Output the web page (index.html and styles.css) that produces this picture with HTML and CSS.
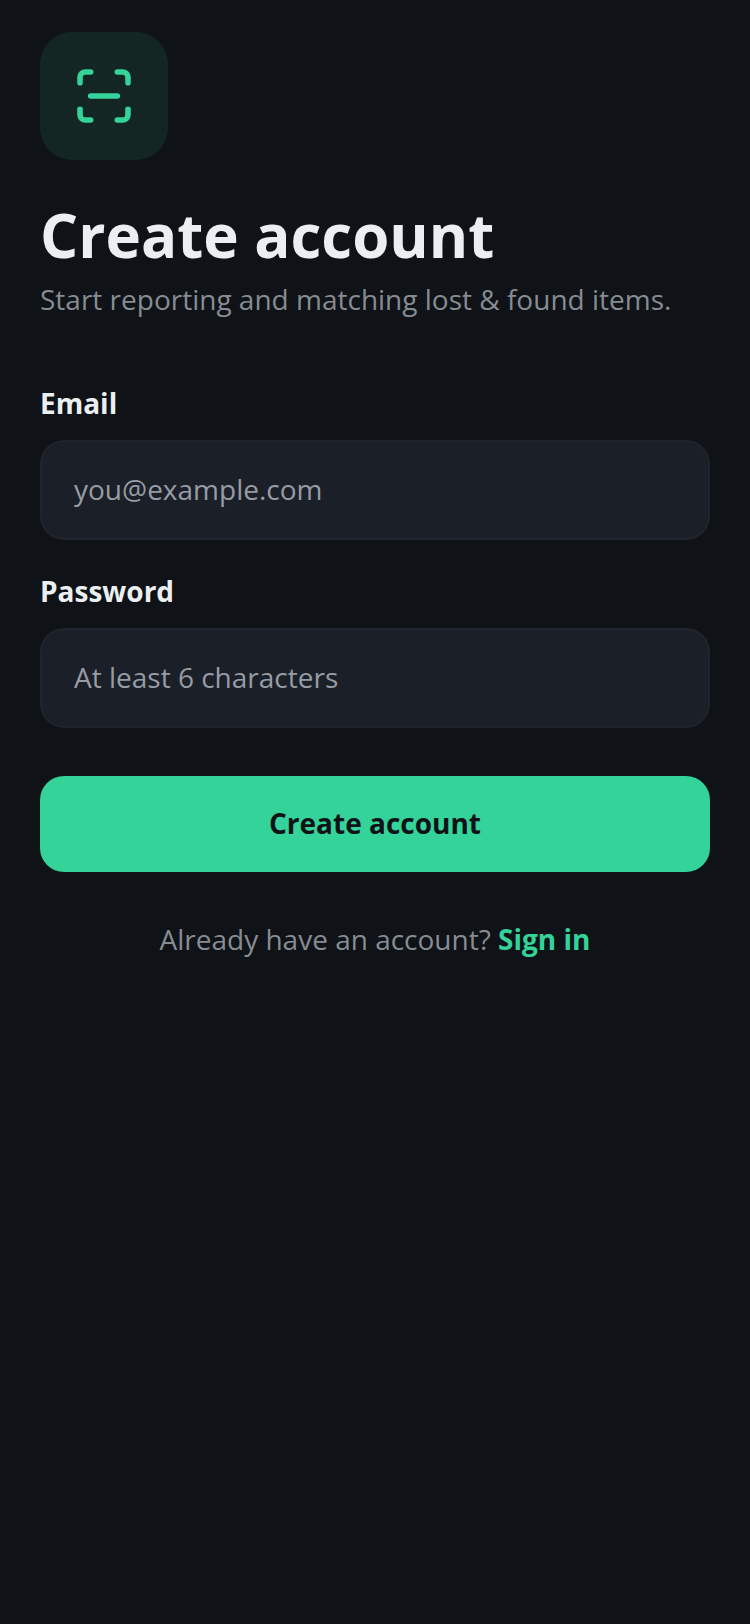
FILE: index.html
```html
<!DOCTYPE html>
<html lang="en">

<head>
    <meta charset="UTF-8">
    <meta name="viewport" content="width=device-width, initial-scale=1.0">
    <title>Create account</title>
    <link rel="stylesheet" href="styles.css">
</head>

<body>
    <div class="signup-container">
        <div class="logo">
            <svg width="64" height="64" viewBox="0 0 24 24" fill="none" stroke="#34d399" stroke-width="2.1"
                stroke-linecap="round" stroke-linejoin="round">
                <path d="M3 7V5a2 2 0 0 1 2-2h2" />
                <path d="M17 3h2a2 2 0 0 1 2 2v2" />
                <path d="M21 17v2a2 2 0 0 1-2 2h-2" />
                <path d="M7 21H5a2 2 0 0 1-2-2v-2" />
                <path d="M7 12h10" />
            </svg>
        </div>

        <h1>Create account</h1>
        <p class="subtitle">Start reporting and matching lost &amp; found items.</p>

        <label class="field-label" for="email">Email</label>
        <input class="field-input" type="text" id="email" placeholder="you@example.com">

        <label class="field-label" for="password">Password</label>
        <input class="field-input" type="password" id="password" placeholder="At least 6 characters">

        <button class="submit-btn">Create account</button>

        <p class="switch-link">Already have an account? <a href="#">Sign in</a></p>
    </div>
</body>

</html>
```

FILE: styles.css
```css
* {
    box-sizing: border-box;
}

html,
body {
    margin: 0;
    height: 100%;
}

body {
    font-family: "Open Sans", Arial, sans-serif;
    background-color: #0f1216;
    color: #eceff1;
}

.signup-container {
    display: flex;
    flex-direction: column;
    padding: 32px 40px;
}

.logo {
    display: flex;
    justify-content: center;
    align-items: center;
    width: 128px;
    height: 128px;
    border-radius: 32px;
    background-color: #142623;
}

h1 {
    margin: 37px 0 0;
    font-size: 60px;
    font-weight: 700;
    line-height: 76px;
}

.subtitle {
    margin: 6px 0 0;
    font-size: 28px;
    line-height: 40px;
    color: #868c93;
}

.field-label {
    margin-top: 64px;
    font-size: 28px;
    font-weight: 700;
    line-height: 40px;
}

.field-input + .field-label {
    margin-top: 31px;
}

.field-input {
    width: 100%;
    height: 100px;
    margin-top: 17px;
    padding: 0 32px 2px;
    border: 2px solid #20242c;
    border-radius: 24px;
    background-color: #1b1f27;
    color: #eceff1;
    font-family: inherit;
    font-size: 28px;
    outline: none;
}

.field-input::placeholder {
    color: #969ca5;
    opacity: 1;
}

.submit-btn {
    height: 96px;
    margin-top: 48px;
    padding: 0 0 2px;
    border: none;
    border-radius: 24px;
    background-color: #34d399;
    color: #0f1216;
    font-family: inherit;
    font-size: 28px;
    font-weight: 700;
    cursor: pointer;
}

.switch-link {
    margin: 47px 0 0;
    text-align: center;
    font-size: 28px;
    line-height: 40px;
    color: #868c93;
}

.switch-link a {
    color: #34d399;
    font-weight: 700;
    text-decoration: none;
}
```
